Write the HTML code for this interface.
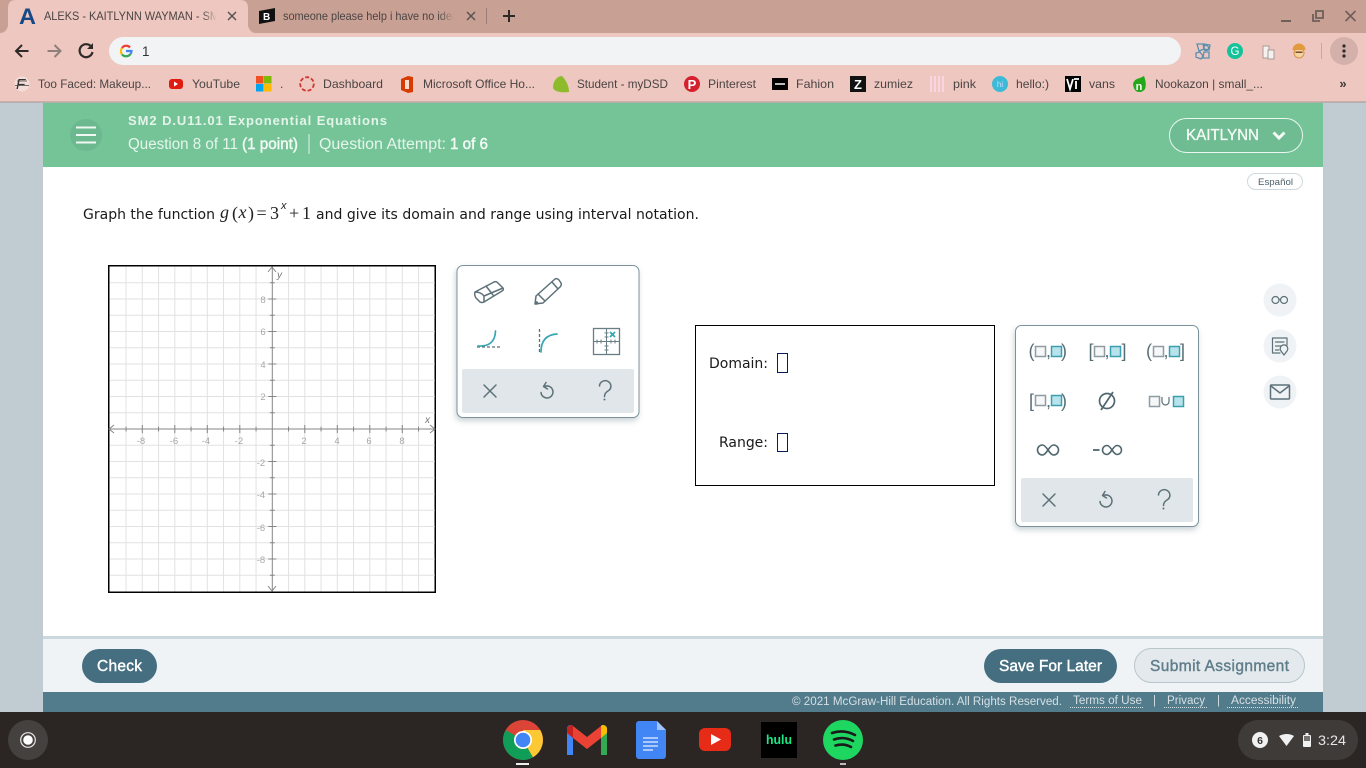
<!DOCTYPE html>
<html><head><meta charset="utf-8"><title>ALEKS</title>
<style>
html,body{margin:0;padding:0;width:1366px;height:768px;overflow:hidden;background:#c0ccd2}
svg{display:block;position:absolute;left:0;top:0}
text{font-family:"Liberation Sans",sans-serif}
.bm{font-size:12px;fill:#4a4443}
.v{font-family:"DejaVu Sans",sans-serif;font-size:14px;fill:#1a1a1a}
.m{font-family:"Liberation Serif",serif;font-size:18px;fill:#222}
.mi{font-style:italic}
.gl{font-family:"Liberation Sans",sans-serif;font-size:9.5px;fill:#a8a8a8;text-anchor:middle}
.ic{fill:none;stroke:#5d7179;stroke-width:1.5;stroke-linecap:round;stroke-linejoin:round}
.t{fill:none;stroke:#3aa6b4;stroke-width:1.7;stroke-linecap:round}
.br{font-family:"Liberation Sans",sans-serif;font-size:18px;fill:#586e77;text-anchor:middle}
.sq{fill:#f6f7f8;stroke:#8f9da3;stroke-width:1.5}
.sb{fill:#b9e3ec;stroke:#3a9fae;stroke-width:1.5}
.md{stroke-width:.45}
</style></head><body>
<svg width="1366" height="768" viewBox="0 0 1366 768" xmlns="http://www.w3.org/2000/svg">
<defs>
<linearGradient id="f1" x1="0" x2="1"><stop offset="0" stop-color="#eec7c0" stop-opacity="0"/><stop offset=".75" stop-color="#eec7c0"/></linearGradient>
<linearGradient id="f2" x1="0" x2="1"><stop offset="0" stop-color="#c9a094" stop-opacity="0"/><stop offset=".75" stop-color="#c9a094"/></linearGradient>
<filter id="sh" x="-10%" y="-10%" width="120%" height="125%"><feDropShadow dx="-1" dy="3" stdDeviation="3" flood-color="#8a9ba3" flood-opacity=".45"/></filter>
</defs>

<!-- tab strip -->
<rect width="1366" height="33" fill="#c9a094"/>
<path d="M0 33Q6 33 8 26V8Q8 0 16 0H240Q248 0 248 8V26Q250 33 256 33Z" fill="#eec7c0"/>
<rect y="33" width="1366" height="69" fill="#eec7c0"/>
<rect y="101.500" width="1366" height="1" fill="#a99490"/>
<text x="19" y="24" font-size="22" font-weight="700" fill="#174a85" textLength="17" lengthAdjust="spacingAndGlyphs">A</text>
<text x="44" y="20" font-size="12" fill="#4a4443" textLength="175" lengthAdjust="spacingAndGlyphs">ALEKS - KAITLYNN WAYMAN - SM</text>
<rect x="202" y="8" width="20" height="18" fill="url(#f1)"/>
<path d="M228 12l8 8M236 12l-8 8" stroke="#5a5352" stroke-width="1.500" fill="none"/>
<path d="M259 11l16-3v13l-16 3z" fill="#111"/><text x="263" y="20" font-size="10" font-weight="700" fill="#fff" font-family="Liberation Serif">B</text>
<text x="283" y="20" font-size="12" fill="#4a4443" textLength="175" lengthAdjust="spacingAndGlyphs">someone please help i have no idea</text>
<rect x="438" y="8" width="22" height="18" fill="url(#f2)"/>
<path d="M467 12l8 8M475 12l-8 8" stroke="#5a5352" stroke-width="1.500" fill="none"/>
<rect x="486" y="8" width="1" height="16" fill="#9c7d75"/>
<path d="M503 16h12M509 10v12" stroke="#2d2928" stroke-width="2" fill="none"/>
<path d="M1281 21h10" stroke="#6e5f5b" stroke-width="2"/>
<path d="M1316 11h7v7h-7zM1313 14v7h7" stroke="#6e5f5b" stroke-width="1.800" fill="none"/>
<path d="M1345.500 11l10 10M1355.500 11l-10 10" stroke="#6e5f5b" stroke-width="1.600" fill="none"/>

<!-- toolbar -->
<rect x="109" y="37" width="1072" height="28" rx="14" fill="#f1f3f4"/>
<path d="M28.500 51H16M22 45l-6 6 6 6" stroke="#2e2a29" stroke-width="2" fill="none"/>
<path d="M47.500 51H60.500M54.500 45l6 6-6 6" stroke="#8f7f7b" stroke-width="2" fill="none"/>
<path d="M91.500 47A6.500 6.500 0 1 0 92.500 52" stroke="#2e2a29" stroke-width="2.200" fill="none"/><path d="M93 43v6h-6z" fill="#2e2a29"/>
<g fill="none" stroke-width="2.200"><path d="M130 47.500A5 5 0 0 0 122 48" stroke="#e94235"/><path d="M122 48A5.500 5.500 0 0 0 122 54.500" stroke="#fbbc05"/><path d="M122 54.500A5.500 5.500 0 0 0 130.500 54" stroke="#34a853"/><path d="M126 51h5.500A5.500 5.500 0 0 1 130.500 54" stroke="#4285f4"/></g>
<text x="142" y="56" font-size="13.500" fill="#333">1</text>
<g fill="none" stroke="#5b8fb0" stroke-width="1.300"><path d="M1197 44h6l1 5-5 2zM1204 44l6 1-1 5-5-1zM1196 53l4-1 3 4-2 3-5-2zM1204 52h5v6h-6z"/><circle cx="1206" cy="48" r="2.500"/></g>
<circle cx="1235" cy="51" r="8" fill="#15c39a"/><text x="1235" y="55" font-size="11.500" fill="#fff" text-anchor="middle">G</text>
<g fill="#f5f1ef" stroke="#a89a96"><rect x="1263" y="46" width="6" height="12"/><rect x="1268" y="50" width="6" height="9"/></g>
<ellipse cx="1299" cy="53" rx="5" ry="5" fill="#f3d3a0" stroke="#d9924a"/><path d="M1292.500 50a6.500 6.500 0 0 1 13 0z" fill="#e29a3c"/><rect x="1295.500" y="51.500" width="7" height="1.500" fill="#7a4a22"/>
<rect x="1321" y="43" width="1" height="16" fill="#c9a8a1"/>
<circle cx="1344" cy="51" r="14" fill="#d4b0aa"/>
<g fill="#2e2a29"><circle cx="1344" cy="46" r="1.600"/><circle cx="1344" cy="51" r="1.600"/><circle cx="1344" cy="56" r="1.600"/></g>

<!-- bookmarks -->
<circle cx="22" cy="84" r="7.500" fill="#f4dcd8"/>
<text x="16" y="89" font-size="15" font-style="italic" fill="#333" font-family="Liberation Serif">F</text><path d="M15 85.500h14M17 81h10" stroke="#444" stroke-width=".8"/>
<text class="bm" x="38" y="88" textLength="113" lengthAdjust="spacingAndGlyphs">Too Faced: Makeup...</text>
<rect x="169" y="79" width="14" height="10" rx="3" fill="#e01b12"/><path d="M174 81.500l4 2.500-4 2.500z" fill="#fff"/>
<text class="bm" x="192" y="88" textLength="48" lengthAdjust="spacingAndGlyphs">YouTube</text>
<rect x="256" y="76" width="7.500" height="7.500" fill="#f25022"/><rect x="264" y="76" width="7.500" height="7.500" fill="#7fba00"/><rect x="256" y="84" width="7.500" height="7.500" fill="#00a4ef"/><rect x="264" y="84" width="7.500" height="7.500" fill="#ffb900"/>
<text class="bm" x="280" y="88">.</text>
<circle cx="307" cy="84" r="6.800" fill="none" stroke="#d0362e" stroke-width="1.800" stroke-dasharray="4 2"/>
<text class="bm" x="323" y="88" textLength="60" lengthAdjust="spacingAndGlyphs">Dashboard</text>
<path d="M401 79l7-3 5 1v15l-5 1-7-3z" fill="#d83b01"/><path d="M405 80h4v9h-4z" fill="#f7ddd0"/>
<text class="bm" x="423" y="88" textLength="112" lengthAdjust="spacingAndGlyphs">Microsoft Office Ho...</text>
<path d="M553 88C553 80 558 76 562 76C566 80 569 86 569 92C562 93 555 92 553 88Z" fill="#8dbb2c"/>
<text class="bm" x="577" y="88" textLength="91" lengthAdjust="spacingAndGlyphs">Student - myDSD</text>
<circle cx="692" cy="84" r="8" fill="#d5202e"/><text x="692" y="89" font-size="13" font-weight="700" fill="#fff" text-anchor="middle" font-family="Liberation Serif">P</text>
<text class="bm" x="708" y="88" textLength="48" lengthAdjust="spacingAndGlyphs">Pinterest</text>
<rect x="772" y="78" width="16" height="12" fill="#000"/><rect x="775" y="83" width="10" height="2" fill="#bbb"/>
<text class="bm" x="796" y="88" textLength="38" lengthAdjust="spacingAndGlyphs">Fahion</text>
<rect x="850" y="76" width="16" height="16" fill="#111"/><text x="858" y="89" font-size="13" font-weight="700" fill="#fff" text-anchor="middle">Z</text>
<text class="bm" x="874" y="88" textLength="39" lengthAdjust="spacingAndGlyphs">zumiez</text>
<path d="M931 76v16M935 76v16M939 76v16M943 76v16" stroke="#f8d5e0" stroke-width="2"/>
<text class="bm" x="953" y="88" textLength="23" lengthAdjust="spacingAndGlyphs">pink</text>
<circle cx="1000" cy="84" r="8" fill="#3dbbd6"/><text x="1000" y="87" font-size="8" fill="#cdf" text-anchor="middle">hi</text>
<text class="bm" x="1016" y="88" textLength="33" lengthAdjust="spacingAndGlyphs">hello:)</text>
<rect x="1065" y="76" width="16" height="16" fill="#000"/><path d="M1067 79l3 10 3-10M1074 79h5M1076 81v8" stroke="#fff" stroke-width="1.800" fill="none"/>
<text class="bm" x="1089" y="88" textLength="26" lengthAdjust="spacingAndGlyphs">vans</text>
<path d="M1133 84q1-5 7-6l4-2q3 8 1 13q-2 3-6 3q-5 0-6-8z" fill="#25a71a"/><text x="1139" y="90" font-size="11" font-weight="700" fill="#fff" text-anchor="middle">n</text>
<text class="bm" x="1155" y="88" textLength="108" lengthAdjust="spacingAndGlyphs">Nookazon | small_...</text>
<text x="1343" y="88" font-size="13" font-weight="700" fill="#3f3a39" text-anchor="middle">»</text>

<!-- page -->
<rect y="102.500" width="1366" height="610" fill="#c0ccd2"/>
<rect x="43" y="103" width="1280" height="533" fill="#fff"/>
<rect x="43" y="103" width="1280" height="64" fill="#75c498"/>
<circle cx="86" cy="135" r="16" fill="#6cb88f"/>
<path d="M76 127.500h20M76 135h20M76 142.500h20" stroke="#f0f8f3" stroke-width="2"/>
<text x="128" y="125" font-size="13" font-weight="700" fill="#e4f4ea" textLength="259">SM2 D.U11.01 Exponential Equations</text>
<text x="128" y="149" font-size="15.500" fill="#e6f5ec" textLength="110" lengthAdjust="spacingAndGlyphs">Question 8 of 11</text>
<text x="242" y="149" font-size="15.500" class="md" stroke="#f2faf5" fill="#f2faf5" textLength="56" lengthAdjust="spacingAndGlyphs">(1 point)</text>
<rect x="308.500" y="134" width="1" height="20" fill="#dff2e7"/>
<text x="319" y="149" font-size="15.500" fill="#e6f5ec" textLength="127" lengthAdjust="spacingAndGlyphs">Question Attempt:</text>
<text x="450" y="149" font-size="15.500" class="md" stroke="#f2faf5" fill="#f2faf5" textLength="38" lengthAdjust="spacingAndGlyphs">1 of 6</text>
<rect x="1169.500" y="118.500" width="133" height="34" rx="17" fill="#6fbc92" stroke="#eaf6ef"/>
<text x="1186" y="140" font-size="15.500" fill="#f4fbf7" stroke="#f4fbf7" stroke-width=".3" textLength="73" lengthAdjust="spacingAndGlyphs">KAITLYNN</text>
<path d="M1273.500 132.500l5.500 5.500 5.500-5.500" stroke="#f4fbf7" stroke-width="3" fill="none"/>
<rect x="1247.500" y="173.500" width="55" height="16" rx="8" fill="#fff" stroke="#cfd8dc"/>
<text x="1258" y="185" font-size="9.500" fill="#4d5f68" textLength="35" lengthAdjust="spacingAndGlyphs">Español</text>

<!-- question -->
<text class="v" x="83" y="219" textLength="132">Graph the function</text>
<text class="m mi" x="220" y="218">g</text>
<text class="m" x="232" y="219" font-size="22">(</text>
<text class="m mi" x="238.500" y="218">x</text>
<text class="m" x="248" y="219" font-size="22">)</text>
<text class="m" x="256.500" y="219">=</text>
<text class="m" x="270" y="219">3</text>
<text x="281" y="209" font-size="11" font-style="italic" fill="#222" font-family="Liberation Serif">x</text>
<text class="m" x="289" y="219">+</text>
<text class="m" x="302" y="219">1</text>
<text class="v" x="316" y="219" textLength="383">and give its domain and range using interval notation.</text>

<!-- graph -->
<rect x="108.750" y="265.750" width="326.500" height="326.500" fill="#fff" stroke="#000" stroke-width="1.500"/>
<g transform="translate(272.3 429) scale(16.25)">
<path vector-effect="non-scaling-stroke" stroke="#e2e2e2" stroke-width="1" fill="none" d="M-9-10V10M-8-10V10M-7-10V10M-6-10V10M-5-10V10M-4-10V10M-3-10V10M-2-10V10M-1-10V10M1-10V10M2-10V10M3-10V10M4-10V10M5-10V10M6-10V10M7-10V10M8-10V10M9-10V10M-10-9H10M-10-8H10M-10-7H10M-10-6H10M-10-5H10M-10-4H10M-10-3H10M-10-2H10M-10-1H10M-10 1H10M-10 2H10M-10 3H10M-10 4H10M-10 5H10M-10 6H10M-10 7H10M-10 8H10M-10 9H10"/>
<path vector-effect="non-scaling-stroke" stroke="#858585" stroke-width="1" fill="none" d="M-10 0H10M0-10V10M-9-.15V.15M-8-.25V.25M-7-.15V.15M-6-.25V.25M-5-.15V.15M-4-.25V.25M-3-.15V.15M-2-.25V.25M-1-.15V.15M1-.15V.15M2-.25V.25M3-.15V.15M4-.25V.25M5-.15V.15M6-.25V.25M7-.15V.15M8-.25V.25M9-.15V.15M-.15-9H.15M-.25-8H.25M-.15-7H.15M-.25-6H.25M-.15-5H.15M-.25-4H.25M-.15-3H.15M-.25-2H.25M-.15-1H.15M-.15 1H.15M-.25 2H.25M-.15 3H.15M-.25 4H.25M-.15 5H.15M-.25 6H.25M-.15 7H.15M-.25 8H.25M-.15 9H.15"/>
</g>
<path d="M114 425l-5 4 5 4M430 425l5 4-5 4M268 272l4-5 4 5M268 586l4 5 4-5" stroke="#858585" fill="none"/>
<text class="gl" x="141" y="444">-8</text><text class="gl" x="174" y="444">-6</text><text class="gl" x="206" y="444">-4</text><text class="gl" x="239" y="444">-2</text><text class="gl" x="304" y="444">2</text><text class="gl" x="337" y="444">4</text><text class="gl" x="369" y="444">6</text><text class="gl" x="402" y="444">8</text>
<text class="gl" x="263" y="303">8</text><text class="gl" x="263" y="335">6</text><text class="gl" x="263" y="368">4</text><text class="gl" x="263" y="400">2</text><text class="gl" x="261" y="466">-2</text><text class="gl" x="261" y="498">-4</text><text class="gl" x="261" y="531">-6</text><text class="gl" x="261" y="563">-8</text>
<text x="277" y="278" font-size="10" font-style="italic" fill="#777" font-family="Liberation Serif">y</text>
<text x="425" y="423" font-size="10" font-style="italic" fill="#777" font-family="Liberation Serif">x</text>

<!-- graph tools panel -->
<rect x="457" y="265.500" width="182" height="152" rx="6" fill="#fff" stroke="#7b929c" filter="url(#sh)"/>
<path class="ic" d="M475 292L494 282Q496 281 498 283L503 288Q504 290 502 291L484 302Q482 303 480 302L476 298Q474 295 475 292ZM475 292Q481 292 484 296L484 302M484 296L503 288M486 286L493 295"/>
<path class="ic" d="M536 296L555 279Q557 278 559 280L561 283Q562 285 560 287L543 303L535 304ZM538 294L545 301M552 282L558 289"/>
<circle cx="536.500" cy="303" r="1.800" fill="#5d7179"/>
<path d="M477 347H501" stroke="#5d7179" stroke-width="1.300" stroke-dasharray="3 2" fill="none"/>
<path class="t" d="M478 346Q495 347 495.500 331"/>
<path d="M539.500 329V353" stroke="#5d7179" stroke-width="1.300" stroke-dasharray="3 2" fill="none"/>
<path class="t" d="M541 352Q541 335 557 334"/>
<rect x="593.500" y="328.500" width="26" height="26" fill="none" stroke="#6a7d85" stroke-width="1.300"/>
<path d="M606.500 328V355M593 341.500H620M597 339.500V343.500M601 339.500V343.500M611 339.500V343.500M615 339.500V343.500M604.500 333H608.500M604.500 337H608.500M604.500 346H608.500M604.500 350H608.500" stroke="#6a7d85" fill="none"/>
<path d="M610 332l5 5M615 332l-5 5" stroke="#3aa6b4" stroke-width="1.800"/>
<rect x="462" y="369" width="172" height="44" rx="2" fill="#e0e6e9"/>
<path class="ic" d="M484 385l12 12M496 385l-12 12"/>
<path class="ic" d="M544.500 386.500A6 6 0 1 1 541 392.500M546 382.500L543.500 386.500L547.500 389"/>
<path class="ic" d="M599.500 386A5.700 5.500 0 1 1 608 391Q604.500 393 604.500 396.500"/><circle cx="604.500" cy="399.500" r="1" fill="#5d7179"/>

<!-- answer box -->
<rect x="695.500" y="325.500" width="299" height="160" fill="#fff" stroke="#000"/>
<text class="v" x="709" y="368" textLength="59">Domain:</text>
<rect x="777.500" y="353.500" width="10" height="19" fill="#fff" stroke="#0a1a5c"/>
<text class="v" x="719" y="447" textLength="49">Range:</text>
<rect x="777.500" y="433.500" width="10" height="18" fill="#fff" stroke="#0a1a5c"/>

<!-- interval panel -->
<rect x="1015.500" y="325.500" width="183" height="201" rx="6" fill="#fff" stroke="#7b929c" filter="url(#sh)"/>
<text class="br" x="1031.500" y="357">(</text><rect class="sq" x="1035.500" y="346.500" width="10" height="10"/><text class="br" x="1048.500" y="357" font-size="13">,</text><rect class="sb" x="1051.500" y="346.500" width="10" height="10"/><text class="br" x="1064" y="357">)</text>
<text class="br" x="1091" y="357">[</text><rect class="sq" x="1094.500" y="346.500" width="10" height="10"/><text class="br" x="1107" y="357" font-size="13">,</text><rect class="sb" x="1110.500" y="346.500" width="10" height="10"/><text class="br" x="1124" y="357">]</text>
<text class="br" x="1149" y="357">(</text><rect class="sq" x="1153.500" y="346.500" width="10" height="10"/><text class="br" x="1166" y="357" font-size="13">,</text><rect class="sb" x="1169.500" y="346.500" width="10" height="10"/><text class="br" x="1182.500" y="357">]</text>
<text class="br" x="1031.500" y="407">[</text><rect class="sq" x="1035.500" y="395.500" width="10" height="10"/><text class="br" x="1048.500" y="407" font-size="13">,</text><rect class="sb" x="1051.500" y="395.500" width="10" height="10"/><text class="br" x="1064" y="407">)</text>
<circle cx="1107" cy="401" r="7.500" fill="none" stroke="#4f666f" stroke-width="1.700"/><path d="M1101 410L1113 392" stroke="#4f666f" stroke-width="1.700"/>
<rect class="sq" x="1149.500" y="396.500" width="10" height="10"/><path d="M1162 397v4.500a3.500 3.500 0 0 0 7 0v-4.500" fill="none" stroke="#5d7179" stroke-width="1.200"/><rect class="sb" x="1173.500" y="396.500" width="10" height="10"/>
<path d="M1048 450c-2-3-4-5-5.500-5a5 5 0 0 0 0 10c1.500 0 3.500-2 5.500-5c2-3 4-5 5.500-5a5 5 0 0 1 0 10c-1.500 0-3.500-2-5.500-5z" fill="none" stroke="#4f666f" stroke-width="1.600"/>
<path d="M1093 450h6.500" stroke="#4f666f" stroke-width="1.800"/>
<path d="M1112 450c-2-3-3.500-4.500-5-4.500a4.500 4.500 0 0 0 0 9c1.500 0 3-1.500 5-4.500c2-3 3.500-4.500 5-4.500a4.500 4.500 0 0 1 0 9c-1.500 0-3-1.500-5-4.500z" fill="none" stroke="#4f666f" stroke-width="1.600"/>
<rect x="1021" y="478" width="172" height="44" rx="2" fill="#e0e6e9"/>
<path class="ic" d="M1043 494l12 12M1055 494l-12 12"/>
<path class="ic" d="M1103.500 495.500A6 6 0 1 1 1100 501.500M1105 491.500L1102.500 495.500L1106.500 498"/>
<path class="ic" d="M1158.500 495A5.700 5.500 0 1 1 1167 500Q1163.500 502 1163.500 505.500"/><circle cx="1163.500" cy="508.500" r="1" fill="#5d7179"/>

<!-- side icons -->
<circle cx="1280" cy="300" r="16.500" fill="#eff3f5"/><circle cx="1280" cy="346" r="16.500" fill="#eff3f5"/><circle cx="1280" cy="392" r="16.500" fill="#eff3f5"/>
<g class="ic" style="stroke-width:1.200"><circle cx="1275.500" cy="300" r="3.500"/><circle cx="1284" cy="300" r="3.500"/><path d="M1279 299.500h1.500"/></g>
<path class="ic" style="stroke-width:1.200" d="M1287 345V338H1272.500V353H1280M1275.500 342H1284M1275.500 346H1281M1275.500 350H1279"/>
<path class="ic" style="stroke-width:1.200" d="M1284 355L1281 351A3.800 3.800 0 1 1 1287 351Z"/>
<rect x="1270.500" y="385" width="19" height="14" rx="1" class="ic"/><path class="ic" d="M1271 386L1280 393L1289 386"/>

<!-- footer -->
<rect x="43" y="636" width="1280" height="3" fill="#cbd8de"/>
<rect x="43" y="639" width="1280" height="53" fill="#eff3f5"/>
<rect x="43" y="692" width="1280" height="20" fill="#527b8b"/>
<rect x="82" y="649" width="75" height="34" rx="17" fill="#456f80"/>
<text x="97" y="671" font-size="15.500" fill="#fff" stroke="#fff" stroke-width=".4" textLength="45">Check</text>
<rect x="984" y="649" width="133" height="34" rx="17" fill="#456f80"/>
<text x="999" y="671" font-size="15.500" fill="#fff" stroke="#fff" stroke-width=".4" textLength="103">Save For Later</text>
<rect x="1134.500" y="648.500" width="170" height="34" rx="17" fill="#e3e9ec" stroke="#b9c6cc"/>
<text x="1150" y="671" font-size="15.500" fill="#5f7d8b" stroke="#5f7d8b" stroke-width=".4" textLength="139">Submit Assignment</text>
<g font-size="11.500" fill="#d5e0e5">
<text x="792" y="705" textLength="270" lengthAdjust="spacingAndGlyphs">© 2021 McGraw-Hill Education. All Rights Reserved.</text>
<text x="1073" y="704" textLength="69" lengthAdjust="spacingAndGlyphs">Terms of Use</text>
<text x="1153" y="704">|</text>
<text x="1167" y="704" textLength="38" lengthAdjust="spacingAndGlyphs">Privacy</text>
<text x="1217" y="704">|</text>
<text x="1231" y="704" textLength="65" lengthAdjust="spacingAndGlyphs">Accessibility</text>
</g>
<path d="M1070 707.500h74M1164 707.500h43M1227 707.500h72" stroke="#d5e0e5" stroke-dasharray="1 1"/>

<!-- shelf -->
<rect y="712" width="1366" height="56" fill="#2b2623"/>
<circle cx="28" cy="740" r="20" fill="#45413f"/><circle cx="28" cy="740" r="7.300" fill="none" stroke="#e6e6e6" stroke-width="1.200"/><circle cx="28" cy="740" r="4.800" fill="#fff"/>
<!-- chrome -->
<circle cx="523" cy="740" r="20" fill="#db4437"/>
<path d="M523 740L505.700 730A20 20 0 0 0 533 757.300Z" fill="#0f9d58"/>
<path d="M523 740L533 757.300A20 20 0 0 0 540.300 730H523Z" fill="#fcc934"/>
<circle cx="523" cy="740" r="9" fill="#fff"/><circle cx="523" cy="740" r="7.300" fill="#4285f4"/>
<rect x="516" y="763" width="13" height="2" fill="#eee"/>
<!-- gmail -->
<path d="M567 728a4 4 0 0 1 4-3l2 1v29h-6z" fill="#4285f4"/>
<path d="M601 726l2-1a4 4 0 0 1 4 3v27h-6z" fill="#34a853"/>
<path d="M567 728l20 16 20-16v4l-20 17-20-17z" fill="#ea4335"/>
<path d="M567 733l6 5v-12l-1-1a5 5 0 0 0-5 4z" fill="#c5221f"/><path d="M601 738l6-5v-5a5 5 0 0 0-5-3l-1 1z" fill="#fbbc04"/>
<path d="M573 726l14 11 14-11v12l-14 11-14-11z" fill="#ea4335"/>
<!-- docs -->
<path d="M639 721H657L666 730V756a3 3 0 0 1-3 3H639a3 3 0 0 1-3-3V724a3 3 0 0 1 3-3Z" fill="#4285f4"/>
<path d="M657 721L666 730H657Z" fill="#a1c2fa"/>
<path d="M643 738h15M643 742h15M643 746h15M643 750h10" stroke="#e8f0fe" stroke-width="1.200"/>
<!-- youtube -->
<rect x="699" y="728" width="32" height="23" rx="6" fill="#e62b17"/><path d="M711 734l10 5.500-10 5.500z" fill="#fff"/>
<!-- hulu -->
<rect x="761" y="722" width="36" height="36" fill="#000"/>
<text x="766" y="744" font-size="13" font-weight="700" fill="#1ce783" textLength="26" lengthAdjust="spacingAndGlyphs">hulu</text>
<!-- spotify -->
<circle cx="843" cy="740" r="20" fill="#1ed760"/>
<path d="M832 733Q844 729 855 735M834 739.500Q844 736 853 741M835.500 745.500Q844 743 851 747" stroke="#1a1a1a" stroke-width="2.600" fill="none" stroke-linecap="round"/>
<rect x="840" y="763" width="6" height="2" fill="#bbb"/>
<!-- status -->
<rect x="1238" y="720" width="120" height="40" rx="20" fill="#3f3b39"/>
<circle cx="1260" cy="740" r="8" fill="#f1f1f1"/><text x="1260" y="744" font-size="10.500" font-weight="700" fill="#333" text-anchor="middle">6</text>
<path d="M1279 736Q1287 732 1294 736L1286.500 746Z" fill="#f1f1f1"/>
<rect x="1303" y="735" width="8" height="12" rx="1" fill="#f1f1f1"/><rect x="1305.500" y="733" width="3" height="2" fill="#f1f1f1"/><rect x="1304" y="736" width="6" height="5" fill="#77726f"/>
<text x="1318" y="745" font-size="14" fill="#e6e6e6" textLength="28" lengthAdjust="spacingAndGlyphs">3:24</text>
</svg>
</body></html>
